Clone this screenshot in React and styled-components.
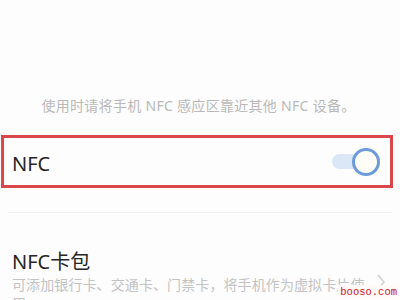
import React from 'react'
import styled, { createGlobalStyle } from 'styled-components'

const GlobalStyle = createGlobalStyle`
    html, body {
        margin: 0;
        padding: 0;
        background: #fdfdfd;
    }
    body {
        font-family: "Noto Sans", "Noto Sans CJK SC", sans-serif;
        width: 400px;
        height: 300px;
        overflow: hidden;
    }
`

const Page = styled.div`
    position: relative;
    width: 400px;
    height: 300px;
    overflow: hidden;
`

const Hint = styled.p`
    margin: 97px 0 0;
    font-size: 14px;
    line-height: 18px;
    letter-spacing: 0.3px;
    color: #b9b9b9;
    text-align: center;
    padding-right: 3px;
`

const Highlight = styled.div`
    box-sizing: border-box;
    margin: 20px 7px 0 1px;
    height: 53px;
    border: 3px solid #d9474b;
    display: flex;
    align-items: center;
    justify-content: space-between;
    padding: 0 10px 0 8px;
`

const Label = styled.span`
    font-size: 20px;
    color: #262626;
    padding-top: 3px;
`

const Toggle = styled.div`
    position: relative;
    width: 48px;
    height: 28px;
    display: flex;
    align-items: center;
`

const Track = styled.div`
    width: 38px;
    height: 15px;
    border-radius: 8px;
    background: #dbe7f6;
`

const Knob = styled.div`
    position: absolute;
    right: 0;
    top: 0;
    width: 22px;
    height: 22px;
    border-radius: 50%;
    border: 3px solid #6d9cd8;
    background: #fffdf6;
`

const Divider = styled.div`
    margin: 24px 8px 0;
    height: 1px;
    background: #f1f1f1;
`

const Item = styled.div`
    margin-top: 38px;
    padding: 0 12px;
    display: flex;
    align-items: flex-start;
    justify-content: space-between;
`

const ItemText = styled.div`
    width: 356px;
    display: flex;
    flex-direction: column;
`

const ItemTitle = styled.span`
    font-size: 20px;
    line-height: 22px;
    color: #262626;
`

const ItemDesc = styled.span`
    margin-top: 2px;
    font-size: 14px;
    line-height: 19px;
    letter-spacing: 0.1px;
    color: #c3c3c3;
`

const Chevron = styled.svg`
    margin-top: 23px;
    margin-right: 2px;
`

const Watermark = styled.div`
    position: absolute;
    right: 1px;
    bottom: 1px;
    padding: 1px 2px;
    background: rgba(255, 250, 250, 0.9);
    color: #d0101a;
    font-family: "Liberation Mono", monospace;
    font-size: 10.5px;
    line-height: 12px;
`

const App = () => {
    return (
        <Page>
            <GlobalStyle />
            <Hint>使用时请将手机 NFC 感应区靠近其他 NFC 设备。</Hint>
            <Highlight>
                <Label>NFC</Label>
                <Toggle>
                    <Track />
                    <Knob />
                </Toggle>
            </Highlight>
            <Divider />
            <Item>
                <ItemText>
                    <ItemTitle>NFC卡包</ItemTitle>
                    <ItemDesc>可添加银行卡、交通卡、门禁卡，将手机作为虚拟卡片使用</ItemDesc>
                </ItemText>
                <Chevron width="10" height="16" viewBox="0 0 10 16">
                    <polyline points="2,1 8,8 2,15" fill="none" stroke="#d2d2d2" strokeWidth="1.6" />
                </Chevron>
            </Item>
            <Watermark>booso.com</Watermark>
        </Page>
    )
}

export default App
